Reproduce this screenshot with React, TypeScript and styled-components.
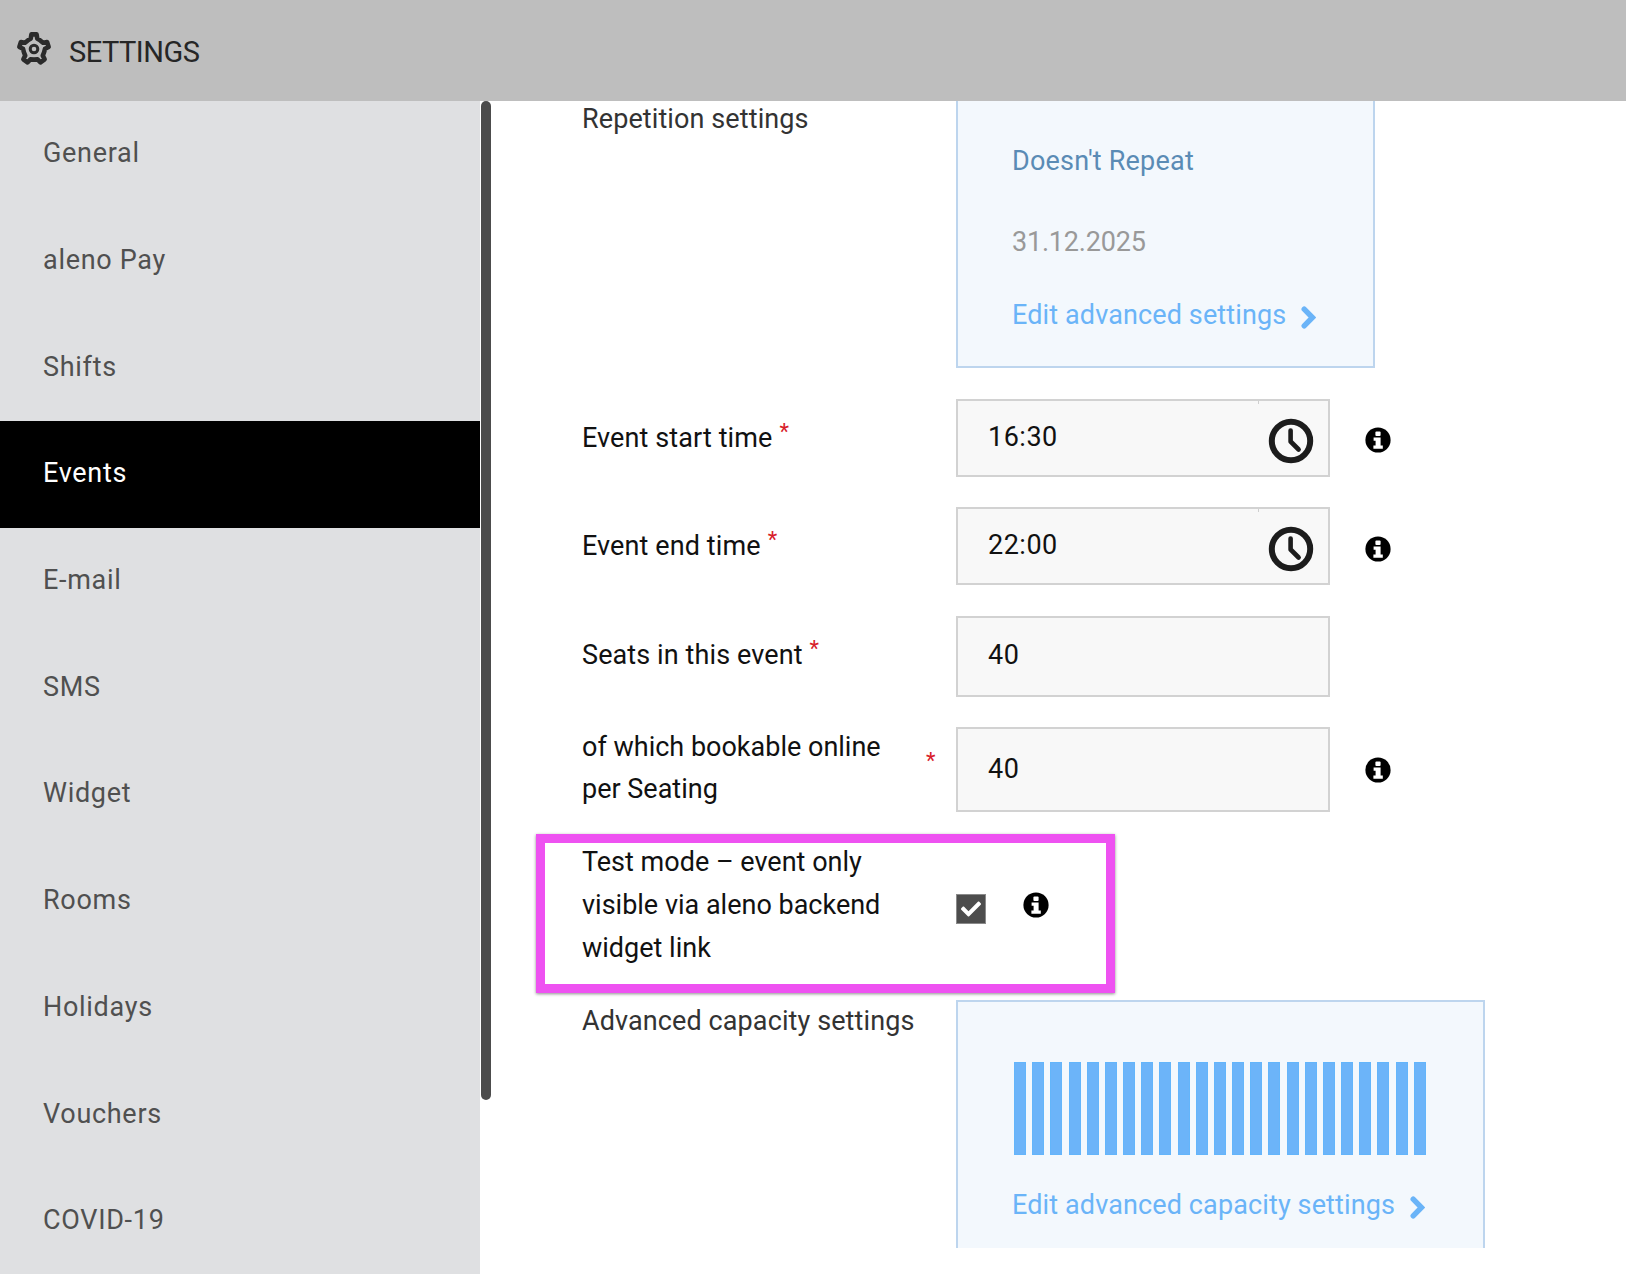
import React from "react";
import styled, { createGlobalStyle } from "styled-components";
import { FaCheck } from "react-icons/fa";

const GlobalStyle = createGlobalStyle`
  html, body { margin: 0; padding: 0; background: #fff; }
  body { font-family: Roboto, "Liberation Sans", sans-serif; width: 1626px; height: 1274px; overflow: hidden; }
  * { box-sizing: border-box; }
`;

const Page = styled.div`
  display: flex;
  flex-direction: column;
  width: 1626px;
  height: 1274px;
  overflow: hidden;
`;

const Header = styled.header`
  flex: 0 0 101px;
  display: flex;
  align-items: center;
  gap: 17px;
  padding: 0 0 4px 16px;
  background: #bebebe;
`;

const HeaderTitle = styled.h1`
  margin: 7px 0 0;
  font-size: 29px;
  font-weight: 400;
  letter-spacing: -0.5px;
  color: #262626;
`;

const Body = styled.div`
  position: relative;
  flex: 1;
  display: flex;
  min-height: 0;
`;

const Sidebar = styled.nav`
  flex: 0 0 480px;
  background: #dfe0e2;
  overflow: hidden;
`;

const NavItem = styled.div<{ $active?: boolean }>`
  display: flex;
  align-items: center;
  height: 106.7px;
  padding: 0 0 2px 43px;
  font-size: 27px;
  letter-spacing: 0.7px;
  color: ${(p) => (p.$active ? "#fff" : "#505050")};
  background: ${(p) => (p.$active ? "#000" : "transparent")};
`;

const ScrollThumb = styled.div`
  position: absolute;
  left: 481px;
  top: 0;
  width: 10px;
  height: 999px;
  border-radius: 5px;
  background: #4c4c4c;
`;

const Form = styled.main`
  flex: 1;
  display: flex;
  flex-direction: column;
  gap: 30.5px;
  padding-left: 102px;
  min-width: 0;
`;

const Row = styled.div<{ $shift?: number }>`
  position: relative;
  display: grid;
  grid-template-columns: 374px auto 1fr;
  align-items: start;
  margin-top: ${(p) => p.$shift ?? 0}px;
`;

const Label = styled.label<{ $muted?: boolean; $offset?: number }>`
  display: block;
  margin-top: ${(p) => p.$offset ?? 0}px;
  font-size: 27px;
  line-height: 43px;
  letter-spacing: 0.1px;
  color: ${(p) => (p.$muted ? "#333" : "#111")};
`;

const WrappedLabel = styled.div`
  display: flex;
  margin-top: -1.5px;
`;

const WrappedText = styled(Label)`
  width: 344px;
  letter-spacing: 0;
`;

const TightText = styled(WrappedText)`
  padding-right: 24px;
  line-height: 42px;
`;

const Required = styled.sup`
  margin-left: 7px;
  font-size: 22px;
  line-height: 0;
  vertical-align: 8px;
  color: #d8202a;
`;

const SideRequired = styled(Required)`
  align-self: flex-start;
  margin: 24px 0 0 0;
  line-height: 22px;
  vertical-align: baseline;
`;

const Card = styled.section<{ $width: number; $height: number; $cut: "top" | "bottom" }>`
  display: flex;
  flex-direction: column;
  width: ${(p) => p.$width}px;
  height: ${(p) => p.$height}px;
  padding-left: 54px;
  background: #f3f8fd;
  border: 2px solid #bdd5ee;
  border-${(p) => p.$cut}: none;
`;

const RepeatText = styled.div`
  margin-top: 39px;
  font-size: 27px;
  line-height: 43px;
  letter-spacing: 0.2px;
  color: #5a8bb5;
`;

const DateText = styled.div`
  margin-top: 38px;
  font-size: 27px;
  line-height: 43px;
  letter-spacing: -0.2px;
  color: #999;
`;

const EditLink = styled.a<{ $top: number }>`
  display: flex;
  align-items: center;
  gap: 15px;
  margin-top: ${(p) => p.$top}px;
  font-size: 27px;
  line-height: 43px;
  letter-spacing: 0.12px;
  color: #6ab4f8;
`;

const FieldBox = styled.div<{ $height: number }>`
  display: flex;
  align-items: center;
  width: 374px;
  height: ${(p) => p.$height}px;
  padding-left: 30px;
  background: #f8f8f8;
  border: 2px solid #d2d2d2;
  font-size: 27px;
  letter-spacing: 0.5px;
  color: #111;
`;

const FieldValue = styled.span<{ $shift?: number }>`
  flex: 1;
  margin-top: ${(p) => p.$shift ?? 0}px;
`;

const ClockAddon = styled.div`
  position: relative;
  align-self: stretch;
  flex: 0 0 70px;
  display: flex;
  align-items: center;
  justify-content: center;
  padding: 6px 5px 0 0;
  &::before {
    content: "";
    position: absolute;
    left: 0;
    top: 0;
    width: 1px;
    height: 3px;
    background: #cfcfcf;
  }
`;

const InfoSlot = styled.div<{ $top: number; $left: number }>`
  display: flex;
  padding: ${(p) => p.$top}px 0 0 ${(p) => p.$left}px;
`;

const CheckBox = styled.div`
  display: flex;
  align-items: center;
  justify-content: center;
  width: 30px;
  height: 30px;
  margin-top: 53px;
  background: #4d4d4d;
  border: 1px solid #8a8a8a;
  color: #fff;
`;

const TestControls = styled.div`
  display: flex;
  align-items: flex-start;
`;

const Highlight = styled.div`
  position: absolute;
  left: -46px;
  top: -6.5px;
  width: 579px;
  height: 158.5px;
  border: 9px solid #ee52f1;
  box-shadow: 0 1px 3px rgba(0, 0, 0, 0.45);
  pointer-events: none;
`;

const Bars = styled.div`
  display: flex;
  justify-content: space-between;
  width: 412px;
  height: 93px;
  margin: 60px 0 0 2px;
`;

const Bar = styled.div`
  width: 12px;
  height: 100%;
  background: #6cb4f9;
  border: 1px solid #63b5fb;
`;

const ChevronMark = styled.svg`
  flex: none;
  margin-top: 4px;
`;

const gearPath = (() => {
  const pts: string[] = [];
  for (let i = 0; i < 5; i++) {
    const c = -90 + i * 72;
    const spec: [number, number][] = [
      [-36, 10.6],
      [-17, 11],
      [-10, 14.8],
      [10, 14.8],
      [17, 11],
    ];
    spec.forEach(([d, r]) => {
      const a = ((c + d) * Math.PI) / 180;
      pts.push(`${(18 + r * Math.cos(a)).toFixed(2)} ${(18 + r * Math.sin(a)).toFixed(2)}`);
    });
  }
  return `M${pts.join("L")}Z`;
})();

const GearIcon = () => (
  <svg width="36" height="36" viewBox="0 0 36 36" fill="none" aria-hidden="true">
    <path d={gearPath} stroke="#2b2b2b" strokeWidth="4.6" strokeLinejoin="round" />
    <circle cx="18" cy="18" r="3.8" stroke="#2b2b2b" strokeWidth="3" />
  </svg>
);

const ClockIcon = () => (
  <svg width="46" height="46" viewBox="0 0 46 46" fill="none" aria-hidden="true">
    <circle cx="23" cy="23" r="19.2" stroke="#1c1c1c" strokeWidth="6" />
    <path d="M22.6 12.5v11l8 8" stroke="#1c1c1c" strokeWidth="4.6" strokeLinecap="round" strokeLinejoin="round" />
  </svg>
);

const InfoIcon = () => (
  <svg width="26" height="26" viewBox="0 0 26 26" aria-hidden="true">
    <circle cx="13" cy="13" r="12.6" fill="#000" />
    <rect x="10.4" y="4.6" width="5.2" height="4.4" rx="1" fill="#fff" />
    <path d="M8.6 10.6h7v8h2.2v3.2H8.4v-3.2h2.2v-4.8h-2z" fill="#fff" />
  </svg>
);

const Chevron = () => (
  <ChevronMark width="15" height="23" viewBox="0 0 15 23" fill="none" aria-hidden="true">
    <path d="M3.2 3.2l8.2 8.3-8.2 8.3" stroke="#6ab4f8" strokeWidth="5.4" strokeLinecap="round" strokeLinejoin="miter" />
  </ChevronMark>
);

const navItems = [
  "General",
  "aleno Pay",
  "Shifts",
  "Events",
  "E-mail",
  "SMS",
  "Widget",
  "Rooms",
  "Holidays",
  "Vouchers",
  "COVID-19",
];

export default function App() {
  return (
    <Page>
      <GlobalStyle />
      <Header>
        <GearIcon />
        <HeaderTitle>SETTINGS</HeaderTitle>
      </Header>
      <Body>
        <Sidebar>
          {navItems.map((n) => (
            <NavItem key={n} $active={n === "Events"}>
              {n}
            </NavItem>
          ))}
        </Sidebar>
        <ScrollThumb />
        <Form>
          <Row>
            <Label $muted $offset={-3}>
              Repetition settings
            </Label>
            <Card $width={419} $height={267} $cut="top">
              <RepeatText>Doesn't Repeat</RepeatText>
              <DateText>31.12.2025</DateText>
              <EditLink $top={30}>
                Edit advanced settings <Chevron />
              </EditLink>
            </Card>
          </Row>
          <Row>
            <Label $offset={18}>
              Event start time<Required>*</Required>
            </Label>
            <FieldBox $height={78}>
              <FieldValue $shift={-2}>16:30</FieldValue>
              <ClockAddon>
                <ClockIcon />
              </ClockAddon>
            </FieldBox>
            <InfoSlot $top={28} $left={35}>
              <InfoIcon />
            </InfoSlot>
          </Row>
          <Row>
            <Label $offset={18}>
              Event end time<Required>*</Required>
            </Label>
            <FieldBox $height={78}>
              <FieldValue $shift={-2}>22:00</FieldValue>
              <ClockAddon>
                <ClockIcon />
              </ClockAddon>
            </FieldBox>
            <InfoSlot $top={29} $left={35}>
              <InfoIcon />
            </InfoSlot>
          </Row>
          <Row>
            <Label $offset={18}>
              Seats in this event<Required>*</Required>
            </Label>
            <FieldBox $height={81}>
              <FieldValue $shift={-2}>40</FieldValue>
            </FieldBox>
          </Row>
          <Row>
            <WrappedLabel>
              <TightText>of which bookable online per Seating</TightText>
              <SideRequired>*</SideRequired>
            </WrappedLabel>
            <FieldBox $height={85}>
              <FieldValue $shift={-2}>40</FieldValue>
            </FieldBox>
            <InfoSlot $top={30} $left={35}>
              <InfoIcon />
            </InfoSlot>
          </Row>
          <Row $shift={-2}>
            <WrappedText>Test mode – event only visible via aleno backend widget link</WrappedText>
            <TestControls>
              <CheckBox>
                <FaCheck size={20} />
              </CheckBox>
              <InfoSlot $top={51} $left={37}>
                <InfoIcon />
              </InfoSlot>
            </TestControls>
            <Highlight />
          </Row>
          <Row>
            <Label $muted>Advanced capacity settings</Label>
            <Card $width={529} $height={248} $cut="bottom">
              <Bars>
                {Array.from({ length: 23 }, (_, i) => (
                  <Bar key={i} />
                ))}
              </Bars>
              <EditLink $top={29}>
                Edit advanced capacity settings <Chevron />
              </EditLink>
            </Card>
          </Row>
        </Form>
      </Body>
    </Page>
  );
}
